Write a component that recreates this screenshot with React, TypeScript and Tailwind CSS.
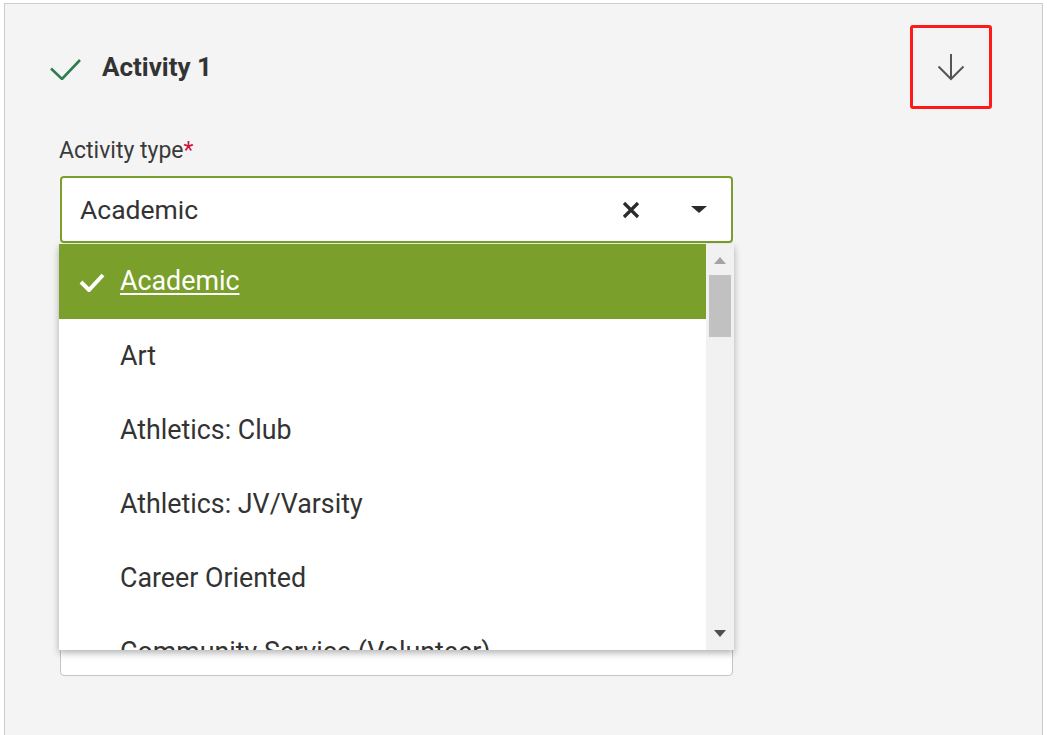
import React from 'react';

const options = [
  'Academic',
  'Art',
  'Athletics: Club',
  'Athletics: JV/Varsity',
  'Career Oriented',
  'Community Service (Volunteer)',
];

export default function App() {
  const selected = 'Academic';

  return (
    <div className="w-[1047px] h-[735px] bg-white overflow-hidden font-['Roboto',sans-serif] text-[#333]">
      <div className="ml-[4px] mt-[3px] w-[1039px] h-[740px] border-l border-t border-r border-[#cccccc] bg-[#f4f4f4] pt-[21px] pl-[45px] pr-[50px]">
        {/* Header */}
        <div className="flex items-center justify-between h-[84px]">
          <div className="flex items-center">
            <svg width="32" height="24" viewBox="0 0 32 24" className="mt-[2px]">
              <path d="M1 12.5 L12 23 L30 4" fill="none" stroke="#2f7d52" strokeWidth="2.6" />
            </svg>
            <span className="ml-[20px] text-[26px] font-bold text-[#333]">Activity 1</span>
          </div>
          <button className="w-[82px] h-[84px] border-[3px] border-[#ff1a1a] rounded-[3px] flex items-center justify-center">
            <svg width="30" height="30" viewBox="0 0 30 30">
              <path d="M15 2 V27 M2.5 14.5 L15 27 L27.5 14.5" fill="none" stroke="#555" strokeWidth="2" />
            </svg>
          </button>
        </div>

        {/* Form */}
        <div className="ml-[9px] mt-[28px]">
          <label className="block text-[23px] leading-[28px] text-[#3a3a3a]">
            Activity type<span className="text-[#d0103a]">*</span>
          </label>
          <div className="relative mt-[11px] ml-[1px] w-[673px]">
            <div className="h-[67px] bg-white border-2 border-[#7a9f2a] rounded-[4px] flex items-center pl-[18px]">
              <span className="text-[26.5px] text-[#333] flex-1">{selected}</span>
              <svg width="18" height="18" viewBox="0 0 18 18" className="mr-[51px]">
                <path d="M2 2 L16 16 M16 2 L2 16" stroke="#2b2b2b" strokeWidth="3.2" />
              </svg>
              <svg width="16" height="7" viewBox="0 0 16 7" className="mr-[24px]">
                <path d="M0 0 H16 L8 7 Z" fill="#2b2b2b" />
              </svg>
            </div>

            {/* Dropdown menu */}
            <div className="absolute z-10 top-[68px] left-[-1px] w-[675px] h-[406px] bg-white overflow-hidden shadow-[0_3px_7px_rgba(0,0,0,0.3)] flex">
              <div className="w-[647px]">
                {options.map((opt, i) => (
                  <div
                    key={opt}
                    className={
                      opt === selected
                        ? 'h-[75px] bg-[#7a9f2a] flex items-center text-white'
                        : 'h-[74px] flex items-center text-[#333]'
                    }
                  >
                    <div className="w-[61px] flex justify-center pl-[4px]">
                      {opt === selected && (
                        <svg width="26" height="20" viewBox="0 0 26 20">
                          <path d="M2 10 L10 18 L24 3" fill="none" stroke="#fff" strokeWidth="4" />
                        </svg>
                      )}
                    </div>
                    <span className={i === 0 ? 'text-[26.8px] underline underline-offset-[3px]' : 'text-[26.8px]'}>
                      {opt}
                    </span>
                  </div>
                ))}
              </div>
              <div className="w-[28px] h-full bg-[#f1f1f1] relative">
                <svg width="12" height="7" viewBox="0 0 12 7" className="absolute left-[8px] top-[13px]">
                  <path d="M0 7 L6 0 L12 7 Z" fill="#a3a3a3" />
                </svg>
                <div className="absolute left-[3px] top-[31px] w-[22px] h-[62px] bg-[#c1c1c1]" />
                <svg width="12" height="7" viewBox="0 0 12 7" className="absolute left-[8px] top-[386px]">
                  <path d="M0 0 H12 L6 7 Z" fill="#505050" />
                </svg>
              </div>
            </div>
          </div>

          {/* Next field (covered by menu) */}
          <label className="block mt-[28px] text-[23px] leading-[28px] text-[#333]">
            Position/Leadership description
          </label>
          <div className="mt-[12px] ml-[1px] w-[673px] h-[365px] bg-white border border-[#c4c4c4] rounded-[4px]" />
        </div>
      </div>
    </div>
  );
}
